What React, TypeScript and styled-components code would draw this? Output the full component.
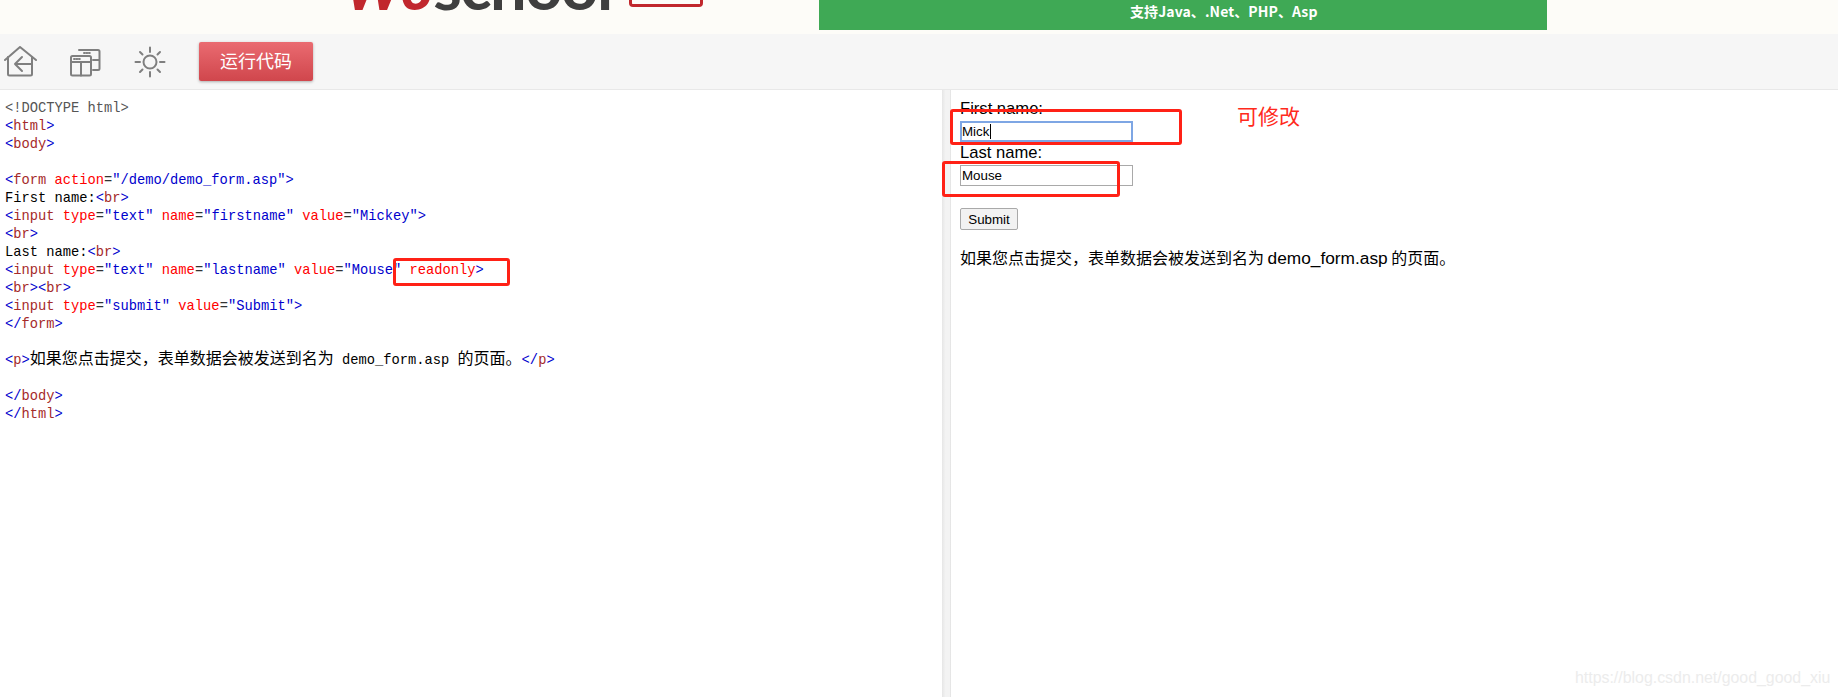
import React from "react";
import styled, { createGlobalStyle } from "styled-components";

const Global = createGlobalStyle`
  html, body { margin: 0; padding: 0; background: #fff; }
  body { width: 1838px; height: 697px; overflow: hidden; font-family: "Liberation Sans", Arial, sans-serif; }
`;

const Page = styled.div`
  position: relative;
  width: 1838px;
  height: 697px;
  display: flex;
  flex-direction: column;
  overflow: hidden;
`;

const Banner = styled.header`
  height: 34px;
  flex: none;
  background: #fdfcf8;
  display: flex;
  align-items: flex-start;
  padding-left: 345px;
  overflow: hidden;
`;

const Logo = styled.div`
  width: 284px;
  height: 10px;
  margin-top: -20px;
  flex: none;
  font-family: "Lato", "Liberation Sans", sans-serif;
  line-height: 10px;
  white-space: nowrap;
`;

const LogoMark = styled.span`
  color: #c1272d;
  font-size: 58px;
  font-weight: 900;
  font-style: italic;
  letter-spacing: -1px;
`;

const LogoWord = styled.span`
  color: #3f3f3f;
  font-size: 65px;
  font-weight: 700;
  letter-spacing: -1.5px;
`;

const LogoBadge = styled.div`
  width: 74px;
  height: 7px;
  flex: none;
  box-sizing: border-box;
  border: 3px solid #c1272d;
  border-top: none;
  border-radius: 0 0 4px 4px;
`;

const Promo = styled.div`
  width: 728px;
  height: 30px;
  flex: none;
  margin-left: 116px;
  box-sizing: border-box;
  padding-left: 311px;
  background: #3fa955;
  color: #fff;
  font-family: "Noto Sans CJK SC", "Liberation Sans", sans-serif;
  font-size: 14px;
  font-weight: 700;
  letter-spacing: 0.1px;
  line-height: 22px;
  white-space: nowrap;
`;

const Toolbar = styled.nav`
  height: 56px;
  flex: none;
  box-sizing: border-box;
  background: #f6f6f6;
  border-bottom: 1px solid #e8e8e8;
  display: flex;
  align-items: center;
  padding-left: 3px;
  gap: 31px;
`;

const ToolIcon = styled.svg`
  width: 34px;
  height: 32px;
  flex: none;
  fill: none;
  stroke: #7f7f7f;
  stroke-width: 2;
  stroke-linecap: round;
  stroke-linejoin: round;
`;

const RunButton = styled.button`
  width: 114px;
  height: 39px;
  margin-left: 1px;
  border: none;
  border-radius: 2px;
  background: linear-gradient(#ea6b71, #d0464c);
  box-shadow: 0 1px 3px rgba(0, 0, 0, 0.3);
  color: #fff;
  font-family: "Noto Sans CJK SC", sans-serif;
  font-size: 18px;
  padding: 0 0 3px;
`;

const Workspace = styled.main`
  flex: 1;
  display: flex;
  min-height: 0;
`;

const CodePane = styled.pre`
  width: 942px;
  flex: none;
  margin: 0;
  box-sizing: border-box;
  padding: 10px 0 0 5px;
  font-family: "Liberation Mono", monospace;
  font-size: 13.75px;
  line-height: 18px;
  color: #000;
`;

const CodeLine = styled.div`
  height: 18px;
  white-space: pre;
`;

const tokenColors: Record<string, string> = {
  doc: "#555555",
  punct: "#0000cd",
  tag: "#a52a2a",
  attr: "#ff0000",
  eq: "#333333",
  val: "#0000cd",
  text: "#000000",
};

const Token = styled.span<{ $kind: string }>`
  color: ${(p) => tokenColors[p.$kind]};
`;

const CjkRun = styled.span`
  font-family: "Noto Sans CJK SC", sans-serif;
  font-size: 16px;
  line-height: 0;
`;

const Gutter = styled.div`
  width: 9px;
  flex: none;
  background: linear-gradient(90deg, #e6e6e6, #f3f3f3 40%, #f3f3f3 85%, #dedede);
`;

const PreviewPane = styled.section`
  flex: 1;
  box-sizing: border-box;
  padding: 10px 0 0 9px;
  color: #000;
  font-size: 16.6px;
`;

const FieldLabel = styled.div<{ $gap?: number }>`
  line-height: 18px;
  margin: ${(p) => p.$gap ?? 0}px 0 3px;
`;

const FieldWrap = styled.div`
  position: relative;
  width: 173px;
  height: 21px;
`;

const TextField = styled.input<{ $focused?: boolean }>`
  display: block;
  width: 173px;
  height: 21px;
  box-sizing: border-box;
  margin: 0;
  padding: ${(p) => (p.$focused ? "0" : "1px")};
  font-family: "Liberation Sans", Arial, sans-serif;
  font-size: 13.33px;
  color: #000;
  outline: none;
  border: ${(p) => (p.$focused ? "2px solid #7ea6e4" : "1px solid #a9a9a9")};
`;

const Caret = styled.span`
  position: absolute;
  left: 30px;
  top: 3px;
  width: 1px;
  height: 15px;
  background: #000;
`;

const SubmitButton = styled.button`
  display: block;
  width: 58px;
  height: 22px;
  margin: 22px 0 0;
  padding: 0;
  box-sizing: border-box;
  border: 1px solid #a9a9a9;
  border-radius: 2px;
  background: #f2f2f2;
  color: #000;
  font-family: "Liberation Sans", Arial, sans-serif;
  font-size: 13.33px;
`;

const Note = styled.p`
  margin: 17px 0 0;
  line-height: 20px;
  font-family: "Noto Sans CJK SC", sans-serif;
  font-size: 16px;
  white-space: nowrap;
`;

const NoteLatin = styled.span`
  font-family: "Liberation Sans", Arial, sans-serif;
  font-size: 17.3px;
`;

const Callout = styled.div<{ $x: number; $y: number; $w: number; $h: number }>`
  position: absolute;
  left: ${(p) => p.$x}px;
  top: ${(p) => p.$y}px;
  width: ${(p) => p.$w}px;
  height: ${(p) => p.$h}px;
  box-sizing: border-box;
  border: 3px solid #ff2116;
  border-radius: 3px;
`;

const CalloutNote = styled.div`
  position: absolute;
  left: 1237px;
  top: 101px;
  color: #ff2a1c;
  font-family: "Noto Sans CJK SC", sans-serif;
  font-size: 21px;
  line-height: 28px;
`;

const Watermark = styled.div`
  position: absolute;
  left: 1575px;
  top: 669px;
  color: #ececec;
  font-size: 15.9px;
  line-height: 18px;
  white-space: nowrap;
`;

type T = [string, string];
const open = (name: string): T[] => [["punct", "<"], ["tag", name], ["punct", ">"]];
const close = (name: string): T[] => [["punct", "</"], ["tag", name], ["punct", ">"]];
const attr = (n: string, v: string): T[] => [["text", " "], ["attr", n], ["eq", "="], ["val", `"${v}"`]];

const lines: T[][] = [
  [["doc", "<!DOCTYPE html>"]],
  open("html"),
  open("body"),
  [],
  [["punct", "<"], ["tag", "form"], ...attr("action", "/demo/demo_form.asp"), ["punct", ">"]],
  [["text", "First name:"], ...open("br")],
  [["punct", "<"], ["tag", "input"], ...attr("type", "text"), ...attr("name", "firstname"), ...attr("value", "Mickey"), ["punct", ">"]],
  open("br"),
  [["text", "Last name:"], ...open("br")],
  [["punct", "<"], ["tag", "input"], ...attr("type", "text"), ...attr("name", "lastname"), ...attr("value", "Mouse"), ["text", " "], ["attr", "readonly"], ["punct", ">"]],
  [...open("br"), ...open("br")],
  [["punct", "<"], ["tag", "input"], ...attr("type", "submit"), ...attr("value", "Submit"), ["punct", ">"]],
  close("form"),
  [],
  [...open("p"), ["cjk", "如果您点击提交，表单数据会被发送到名为"], ["text", " demo_form.asp "], ["cjk", "的页面。"], ...close("p")],
  [],
  close("body"),
  close("html"),
];

export default function App() {
  return (
    <Page>
      <Global />
      <Banner>
        <Logo>
          <LogoMark>W3</LogoMark>
          <LogoWord>school</LogoWord>
        </Logo>
        <LogoBadge />
        <Promo>支持Java、.Net、PHP、Asp</Promo>
      </Banner>
      <Toolbar>
        <ToolIcon viewBox="3 45 34 32">
          <path d="M5 59 20 46 36 59" />
          <path d="M8 56v17a1.5 1.5 0 0 0 1.5 1.5H30.5a1.5 1.5 0 0 0 1.5-1.5V56" />
          <path d="M32 63H15M22 56l-7 7 7 7" />
        </ToolIcon>
        <ToolIcon viewBox="68 45 34 32">
          <rect x="71" y="55" width="20" height="19.5" rx="1.5" />
          <path d="M71 61H91M81 61V74.5" />
          <path d="M79 49H98a1.5 1.5 0 0 1 1.5 1.5V67.5a1.5 1.5 0 0 1-1.5 1.5H93M93 59H99" />
          <path d="M74 58h.8M76.5 58h.8M79 58h.8M84 52h.8M86.5 52h.8M89 52h.8" />
        </ToolIcon>
        <ToolIcon viewBox="133 46 34 32">
          <circle cx="150" cy="62" r="6.5" />
          <path d="M150 47.5V52M150 72V76.5M135.5 62H140M160 62H164.5M140 52l2.5 2.5M160 52l-2.5 2.5M140 72l2.5-2.5M160 72l-2.5-2.5" />
        </ToolIcon>
        <RunButton>运行代码</RunButton>
      </Toolbar>
      <Workspace>
        <CodePane>
          {lines.map((line, i) => (
            <CodeLine key={i}>
              {line.map(([kind, text], j) =>
                kind === "cjk" ? <CjkRun key={j}>{text}</CjkRun> : <Token key={j} $kind={kind}>{text}</Token>
              )}
            </CodeLine>
          ))}
        </CodePane>
        <Gutter />
        <PreviewPane>
          <FieldLabel>First name:</FieldLabel>
          <FieldWrap>
            <TextField $focused readOnly value="Mick" />
            <Caret />
          </FieldWrap>
          <FieldLabel $gap={2}>Last name:</FieldLabel>
          <FieldWrap>
            <TextField readOnly value="Mouse" />
          </FieldWrap>
          <SubmitButton>Submit</SubmitButton>
          <Note>如果您点击提交，表单数据会被发送到名为 <NoteLatin>demo_form.asp</NoteLatin> 的页面。</Note>
        </PreviewPane>
      </Workspace>
      <Callout $x={393} $y={258} $w={117} $h={28} />
      <Callout $x={950} $y={109} $w={232} $h={36} />
      <Callout $x={942} $y={161} $w={178} $h={36} />
      <CalloutNote>可修改</CalloutNote>
      <Watermark>https://blog.csdn.net/good_good_xiu</Watermark>
    </Page>
  );
}
